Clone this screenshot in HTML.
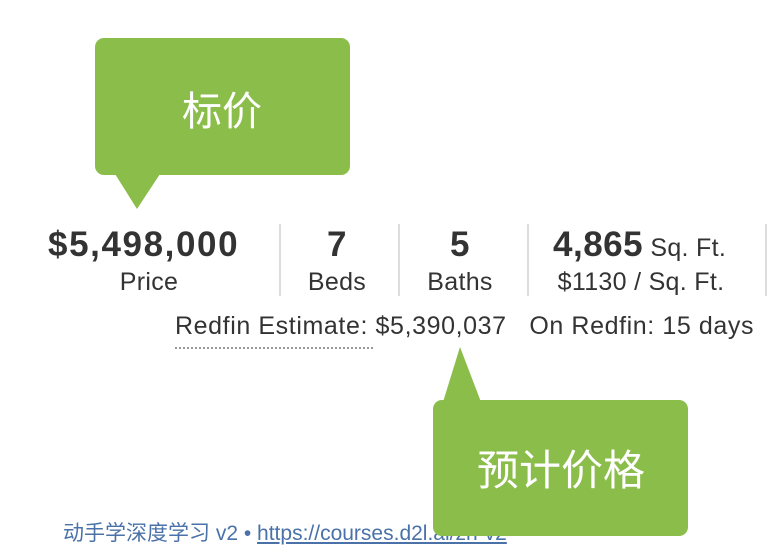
<!DOCTYPE html>
<html><head><meta charset="utf-8"><style>
body{margin:0;width:777px;height:550px;background:#fff;position:relative;overflow:hidden;font-family:"Liberation Sans","Noto Sans CJK SC",sans-serif;color:#333}
.a{position:absolute;white-space:nowrap}
.big{font-size:35px;font-weight:bold;top:225px;color:#333;letter-spacing:0.5px}
.lab{font-size:25px;top:268px;color:#333;letter-spacing:0.3px}
.div{position:absolute;top:224px;width:2px;height:72px;background:#ddd}
.c{transform:translateX(-50%)}
.box{position:absolute;background:#8bbd4b;border-radius:9px}
.ct{color:#fff;font-family:"Noto Sans CJK SC",sans-serif}
</style></head><body>
<div class="box" style="left:95px;top:38px;width:255px;height:137px"></div>
<svg class="a" style="left:0;top:0" width="777" height="550"><polygon points="115,174 160,174 137,209" fill="#8bbd4b"/><polygon points="443,402 481,402 460,347" fill="#8bbd4b"/></svg>
<div class="a ct c" style="left:222px;top:79px;font-size:40px">标价</div>

<div class="a big" style="left:48px;letter-spacing:1.6px">$5,498,000</div>
<div class="a lab c" style="left:149px">Price</div>
<div class="div" style="left:279px"></div>
<div class="a big c" style="left:337px">7</div>
<div class="a lab c" style="left:337px">Beds</div>
<div class="div" style="left:398px"></div>
<div class="a big c" style="left:460px">5</div>
<div class="a lab c" style="left:460px">Baths</div>
<div class="div" style="left:527px"></div>
<div class="a big" style="left:553px">4,865<span style="font-size:25px;font-weight:normal;letter-spacing:0.3px"> Sq. Ft.</span></div>
<div class="a lab c" style="left:641px">$1130 / Sq. Ft.</div>
<div class="div" style="left:765px"></div>
<div class="a" style="left:175px;top:312px;font-size:25px;letter-spacing:0.6px">Redfin Estimate: $5,390,037 &nbsp;&nbsp;On Redfin: 15 days</div>
<div class="a" style="left:175px;top:347px;width:198px;border-top:2px dotted #999"></div>
<div class="a" style="left:63px;top:517px;font-size:21px;color:#4a72a8">动手学深度学习 v2 • <span style="text-decoration:underline">https://courses.d2l.ai/zh-v2</span></div>
<div class="box" style="left:433px;top:400px;width:255px;height:136px"></div>
<div class="a ct c" style="left:561px;top:437px;font-size:42px">预计价格</div>
</body></html>
